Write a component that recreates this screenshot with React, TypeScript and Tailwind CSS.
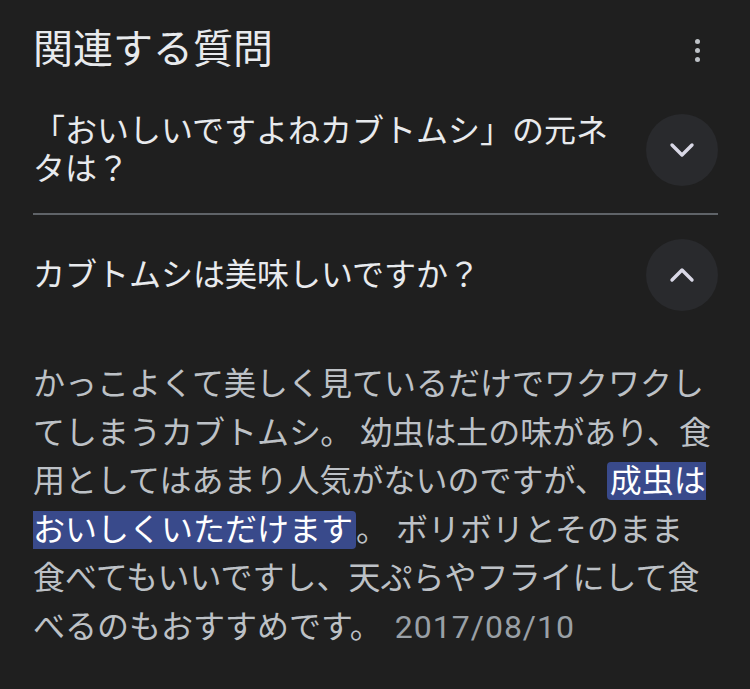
const font = "font-['Roboto','Noto_Sans_CJK_JP',sans-serif]";

function Chevron({ up }: { up?: boolean }) {
  return (
    <svg width="26" height="16" viewBox="0 0 26 16" fill="none" className={up ? "rotate-180" : ""}>
      <path d="M3 3l10 10 10-10" stroke="#d9d8e6" strokeWidth="3.4" strokeLinecap="round" strokeLinejoin="round" />
    </svg>
  );
}

function ToggleButton({ up }: { up?: boolean }) {
  return (
    <div className="flex h-[72px] w-[72px] shrink-0 items-center justify-center rounded-full bg-[#292a2d]">
      <Chevron up={up} />
    </div>
  );
}

export default function App() {
  return (
    <div className={`h-[689px] w-[750px] overflow-hidden bg-[#1f1f1f] pl-[33px] pr-[32px] ${font}`}>
      <div className="flex h-[100px] items-center justify-between">
        <h2 className="text-[40px] leading-none text-[#e8eaed]">関連する質問</h2>
        <div className="mr-[18px] flex flex-col items-center gap-[4px]">
          <span className="h-[5px] w-[5px] rounded-full bg-[#bdc1c6]" />
          <span className="h-[5px] w-[5px] rounded-full bg-[#bdc1c6]" />
          <span className="h-[5px] w-[5px] rounded-full bg-[#bdc1c6]" />
        </div>
      </div>

      <div className="flex items-center gap-[16px] pb-[25px] pt-[12px]">
        <p className="flex-1 text-[32px] leading-[38px] text-[#e8eaed]">
          「おいしいですよねカブトムシ」の元ネタは？
        </p>
        <ToggleButton />
      </div>

      <div className="h-[2px] bg-[#5f6368]" />

      <div className="flex items-center gap-[16px] pt-[24px]">
        <p className="flex-1 text-[32px] leading-[38px] text-[#e8eaed]">カブトムシは美味しいですか？</p>
        <ToggleButton up />
      </div>

      <p className="mt-[49px] whitespace-nowrap text-[32px] leading-[48.6px] text-[#bdc1c6]">
        かっこよくて美しく見ているだけでワクワクし
        <br />
        てしまうカブトムシ。 幼虫は土の味があり、食
        <br />
        用としてはあまり人気がないのですが、
        <span className="rounded-[4px] bg-[#394a8b] px-[3px] text-white">
          成虫は
          <br />
          おいしくいただけます
        </span>
        。 ボリボリとそのまま
        <br />
        食べてもいいですし、天ぷらやフライにして食
        <br />
        べるのもおすすめです。{" "}
        <span className="ml-[5px] tracking-[1px] text-[#9aa0a6]">2017/08/10</span>
      </p>
    </div>
  );
}
